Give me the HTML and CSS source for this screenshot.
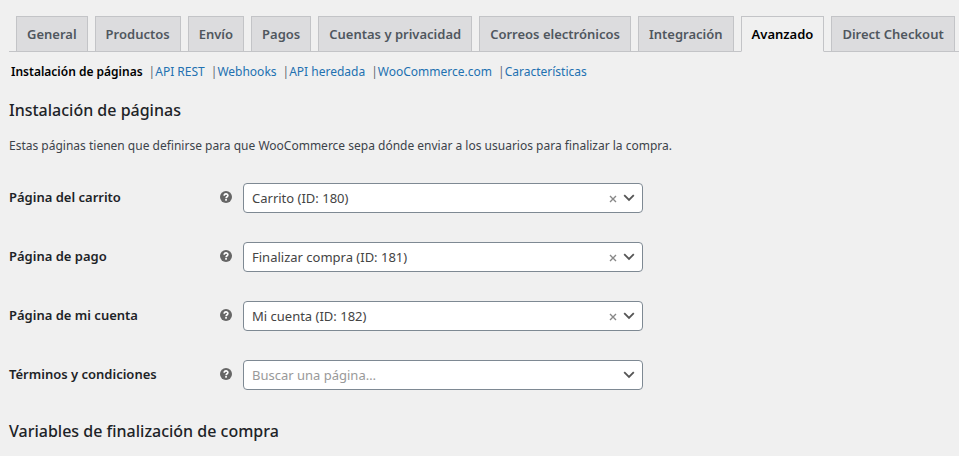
FILE: index.html
```html
<!DOCTYPE html>
<html lang="es">
<head>
<meta charset="utf-8">
<meta name="viewport" content="width=device-width, initial-scale=1">
<title>Ajustes de WooCommerce</title>
<link rel="stylesheet" href="styles.css">
</head>
<body>
<svg class="sprite" aria-hidden="true">
  <symbol id="help" viewBox="0 0 12 12">
    <circle cx="6" cy="6" r="6" fill="#666"/>
    <path d="M4.200 4.700C4.200 2.300 7.900 2.400 7.900 4.500C7.900 5.800 6.100 5.700 6.100 7.200" fill="none" stroke="#fff" stroke-width="1.600"/>
    <rect x="5.200" y="8" width="1.700" height="1.700" fill="#fff"/>
  </symbol>
  <symbol id="chevron" viewBox="0 0 12 8">
    <path d="M1.200 1.200L6 6L10.800 1.200" fill="none" stroke="#555" stroke-width="1.800"/>
  </symbol>
  <symbol id="cross" viewBox="0 0 8 8">
    <path d="M1 1L7 7M7 1L1 7" fill="none" stroke="#888" stroke-width="1.400"/>
  </symbol>
</svg>
<nav class="tabs">
  <a class="tab" href="#">General</a>
  <a class="tab" href="#">Productos</a>
  <a class="tab" href="#">Envío</a>
  <a class="tab" href="#">Pagos</a>
  <a class="tab" href="#">Cuentas y privacidad</a>
  <a class="tab" href="#">Correos electrónicos</a>
  <a class="tab" href="#">Integración</a>
  <a class="tab tab-active" href="#" aria-current="page">Avanzado</a>
  <a class="tab" href="#">Direct Checkout</a>
</nav>
<main class="content">
  <ul class="sections">
    <li><a class="current" href="#">Instalación de páginas</a></li>
    <li>|<a href="#">API REST</a></li>
    <li>|<a href="#">Webhooks</a></li>
    <li>|<a href="#">API heredada</a></li>
    <li>|<a href="#">WooCommerce.com</a></li>
    <li>|<a href="#">Características</a></li>
  </ul>
  <h2>Instalación de páginas</h2>
  <p class="intro">Estas páginas tienen que definirse para que WooCommerce sepa dónde enviar a los usuarios para finalizar la compra.</p>
  <form class="fields">
    <div class="field">
      <label for="cart">Página del carrito</label>
      <svg class="help"><use href="#help"/></svg>
      <div class="picker">
        <select id="cart"><option>Carrito (ID: 180)</option></select>
        <button class="clear" type="button" aria-label="Vaciar"><svg><use href="#cross"/></svg></button>
        <svg class="chevron"><use href="#chevron"/></svg>
      </div>
    </div>
    <div class="field">
      <label for="checkout">Página de pago</label>
      <svg class="help"><use href="#help"/></svg>
      <div class="picker">
        <select id="checkout"><option>Finalizar compra (ID: 181)</option></select>
        <button class="clear" type="button" aria-label="Vaciar"><svg><use href="#cross"/></svg></button>
        <svg class="chevron"><use href="#chevron"/></svg>
      </div>
    </div>
    <div class="field">
      <label for="account">Página de mi cuenta</label>
      <svg class="help"><use href="#help"/></svg>
      <div class="picker">
        <select id="account"><option>Mi cuenta (ID: 182)</option></select>
        <button class="clear" type="button" aria-label="Vaciar"><svg><use href="#cross"/></svg></button>
        <svg class="chevron"><use href="#chevron"/></svg>
      </div>
    </div>
    <div class="field">
      <label for="terms">Términos y condiciones</label>
      <svg class="help"><use href="#help"/></svg>
      <div class="picker">
        <select id="terms" class="empty"><option>Buscar una página…</option></select>
        <svg class="chevron"><use href="#chevron"/></svg>
      </div>
    </div>
  </form>
  <h2>Variables de finalización de compra</h2>
</main>
</body>
</html>
```
FILE: styles.css
```css
* {
  box-sizing: border-box;
}

body {
  margin: 0;
  padding: 16px 0 0 9px;
  background: #f0f0f0;
  color: #3c434a;
  font: 12px/20px "Noto Sans", "Open Sans", sans-serif;
}

.sprite {
  display: none;
}

.tabs {
  display: flex;
  gap: 7px;
  padding-left: 7px;
  border-bottom: 1px solid #c3c4c7;
}

.tab {
  flex: none;
  margin-bottom: -1px;
  padding: 7px 10px;
  border: 1px solid #c3c4c7;
  background: #dcdcde;
  color: #50575e;
  font-size: 13px;
  font-weight: 600;
  text-decoration: none;
  white-space: nowrap;
}

.tab-active {
  border-bottom-color: #f0f0f0;
  background: #f0f0f0;
  color: #000;
}

.sections {
  display: flex;
  gap: 6px;
  margin: 0;
  padding: 10px 2px 0;
  list-style: none;
  white-space: nowrap;
  color: #646970;
}

.sections a {
  color: #2271b1;
  text-decoration: none;
}

.sections .current {
  color: #000;
  font-weight: 600;
}

h2 {
  margin: 16px 0 0;
  color: #1d2327;
  font-size: 16px;
  font-weight: 500;
  line-height: 24px;
}

.intro {
  margin: 14px 0 0;
}

.fields {
  display: grid;
  gap: 29px;
  padding: 27px 0 13px;
}

.field {
  display: grid;
  grid-template-columns: 211px 12px minmax(0, 411px);
  align-items: center;
}

.field label {
  padding-bottom: 2px;
  color: #1d2327;
  font-size: 13px;
  font-weight: 600;
}

.help {
  width: 12px;
  height: 12px;
  margin-bottom: 2px;
}

.picker {
  position: relative;
  margin-left: 11px;
}

.picker select {
  display: block;
  width: 100%;
  height: 30px;
  padding: 0 48px 0 8px;
  border: 1px solid #7e8993;
  border-radius: 4px;
  background: #fff;
  color: #444;
  font: inherit;
  font-size: 13px;
  appearance: none;
}

.picker .empty {
  color: #999;
}

.clear {
  position: absolute;
  top: 8px;
  right: 22px;
  display: grid;
  place-items: center;
  width: 16px;
  height: 16px;
  padding: 0;
  border: 0;
  background: none;
}

.clear svg {
  width: 8px;
  height: 8px;
}

.chevron {
  position: absolute;
  top: 11px;
  right: 8px;
  width: 12px;
  height: 8px;
  pointer-events: none;
}
```
